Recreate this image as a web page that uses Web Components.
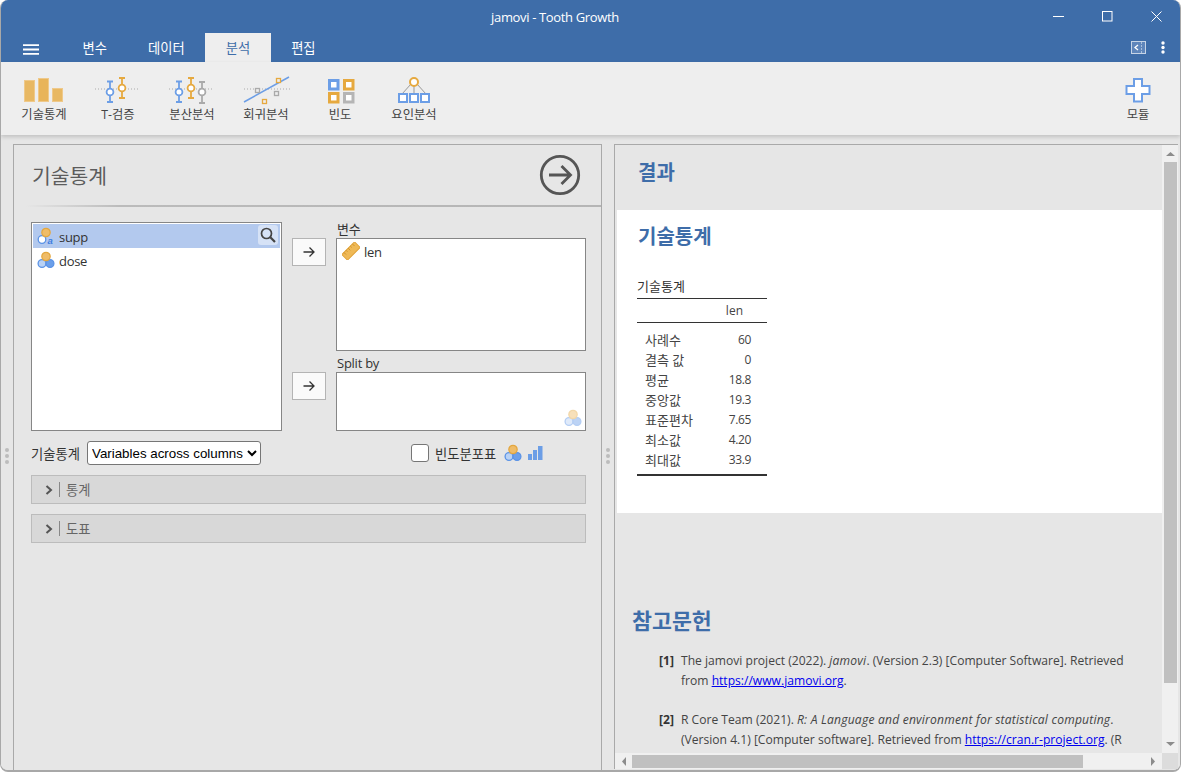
<!DOCTYPE html>
<html lang="ko">
<head>
<meta charset="utf-8">
<title>jamovi - Tooth Growth</title>
<style>
  html, body {
    margin: 0;
    height: 100%;
    background: #fff;
    overflow: hidden;
  }
  body {
    font-family: "Open Sans", "Noto Sans CJK KR", sans-serif;
    font-size: 13px;
    color: #333;
  }
</style>
</head>
<body>
<jm-window>
  <jm-titlebar title-text="jamovi - Tooth Growth"></jm-titlebar>
  <jm-menubar></jm-menubar>
  <jm-ribbon></jm-ribbon>
  <jm-main>
    <jm-options slot="left"></jm-options>
    <jm-results slot="right"></jm-results>
  </jm-main>
</jm-window>

<script>
const BLUE = "#3e6da9";

function nominalIcon(opacity = 1, textType = false) {
  const left = textType
    ? `<circle cx="5" cy="12.5" r="3.8" fill="#fff" stroke="#5b93e6" stroke-width="1.3"/>
       <text x="10.5" y="17" font-size="9.5" font-weight="700" font-style="italic" fill="#3f7fe0" font-family="Liberation Sans">a</text>`
    : `<circle cx="5" cy="12.5" r="3.9" fill="#b9d2f5" stroke="#5b93e6" stroke-width="1.3"/>
       <circle cx="13" cy="12.5" r="3.9" fill="#6c9fe9" stroke="#5b93e6" stroke-width="1.3"/>`;
  return `<svg width="18" height="18" viewBox="0 0 18 18" style="display:block;opacity:${opacity}">
    ${left}
    <circle cx="9" cy="5.5" r="4.2" fill="#efbc68" stroke="#e3a740" stroke-width="1.2"/>
  </svg>`;
}

function arrowIcon() {
  return `<svg width="12" height="12" viewBox="0 0 12 12" style="display:block">
    <path d="M0.5 6H11M6.5 1.5L11 6L6.5 10.5" fill="none" stroke="#333" stroke-width="1.3"/>
  </svg>`;
}

class JmWindow extends HTMLElement {
  constructor() {
    super();
    this._shadowRoot = this.attachShadow({ mode: "open" });
    this._shadowRoot.innerHTML = `
      <style>
        :host {
          display: flex;
          flex-direction: column;
          box-sizing: border-box;
          height: 772px;
          border: 1px solid #a8a8a8;
          border-top: 0;
          border-bottom-width: 2px;
          border-radius: 8px;
          overflow: hidden;
          background: #e6e6e6;
        }
      </style>
      <slot></slot>
    `;
  }
}

class JmTitlebar extends HTMLElement {
  constructor() {
    super();
    this._shadowRoot = this.attachShadow({ mode: "open" });
    this._shadowRoot.innerHTML = `
      <style>
        :host {
          display: flex;
          align-items: center;
          height: 33px;
          flex: none;
          background: ${BLUE};
          color: #fff;
        }
        .title {
          flex: 1;
          padding-left: 76px;
          text-align: center;
          font-size: 13px;
          letter-spacing: -0.35px;
        }
        .ctl {
          width: 49px;
          height: 33px;
          display: flex;
          align-items: center;
          justify-content: center;
        }
        .ctl svg {
          margin-left: 2px;
        }
      </style>
      <div class="title">${this.getAttribute("title-text")}</div>
      <div class="ctl">
        <svg width="11" height="11" viewBox="0 0 11 11"><path d="M0 5.5H11" stroke="#fff"/></svg>
      </div>
      <div class="ctl">
        <svg width="11" height="11" viewBox="0 0 11 11"><rect x=".5" y=".5" width="9.5" height="9.5" fill="none" stroke="#fff"/></svg>
      </div>
      <div class="ctl">
        <svg width="11" height="11" viewBox="0 0 11 11"><path d="M.5 .5L10.5 10.5M10.5 .5L.5 10.5" stroke="#fff"/></svg>
      </div>
    `;
  }
}

class JmMenubar extends HTMLElement {
  constructor() {
    super();
    this._shadowRoot = this.attachShadow({ mode: "open" });
    this._shadowRoot.innerHTML = `
      <style>
        :host {
          display: flex;
          align-items: stretch;
          height: 29px;
          flex: none;
          background: ${BLUE};
          color: #fff;
          font-size: 13.3px;
        }
        .burger {
          width: 61px;
          display: flex;
          align-items: center;
          padding: 3px 0 0 22px;
          box-sizing: border-box;
        }
        .tab {
          padding: 0 20.5px 1px;
          display: flex;
          align-items: center;
        }
        .tab.active {
          background: #eeeeee;
          color: ${BLUE};
        }
        .right {
          margin-left: auto;
          display: flex;
          align-items: center;
          gap: 15px;
          padding-right: 15px;
        }
      </style>
      <div class="burger">
        <svg width="16" height="11" viewBox="0 0 16 11">
          <path d="M0 1.2H16M0 5.5H16M0 9.8H16" stroke="#fff" stroke-width="1.8"/>
        </svg>
      </div>
      <div class="tab">변수</div>
      <div class="tab">데이터</div>
      <div class="tab active">분석</div>
      <div class="tab">편집</div>
      <div class="right">
        <svg width="15" height="13" viewBox="0 0 15 13">
          <rect x=".5" y=".5" width="14" height="12" fill="#5f86bb" stroke="#c6d4e6"/>
          <path d="M7 4L4 6.5L7 9" fill="none" stroke="#fff" stroke-width="1.3"/>
          <path d="M10.5 1V12" stroke="#a9c0dc" stroke-dasharray="2 1"/>
        </svg>
        <svg width="4" height="13" viewBox="0 0 4 13">
          <circle cx="2" cy="2" r="1.7" fill="#fff"/>
          <circle cx="2" cy="6.5" r="1.7" fill="#fff"/>
          <circle cx="2" cy="11" r="1.7" fill="#fff"/>
        </svg>
      </div>
    `;
  }
}

class JmRibbonButton extends HTMLElement {
  constructor() {
    super();
    this._shadowRoot = this.attachShadow({ mode: "open" });
    this._shadowRoot.innerHTML = `
      <style>
        :host {
          display: flex;
          flex-direction: column;
          align-items: center;
          width: 74px;
          padding-top: 10px;
          font-size: 12.3px;
          color: #444;
        }
        .icon {
          width: 60px;
          height: 36px;
        }
        .label {
          line-height: 16px;
          margin-top: -1px;
        }
      </style>
      <div class="icon"><slot></slot></div>
      <div class="label">${this.getAttribute("label")}</div>
    `;
  }
}

class JmRibbon extends HTMLElement {
  constructor() {
    super();
    const pin = (x, y1, y2, cy, c) => `
      <path d="M${x} ${y1}V${y2}M${x - 3} ${y1}H${x + 3}M${x - 3} ${y2}H${x + 3}" stroke="${c}" stroke-width="1.8" fill="none"/>
      <circle cx="${x}" cy="${cy}" r="3.4" fill="#fff" stroke="${c}" stroke-width="1.8"/>`;
    const dots = (x1, x2) =>
      `<path d="M${x1} 17H${x2}" stroke="#aaa" stroke-dasharray="1 2"/>`;
    const sq = (x, y, c) =>
      `<rect x="${x + 0.5}" y="${y + 0.5}" width="4" height="4" fill="#eee" stroke="${c}" stroke-width="1.3"/>`;
    const box = (x, y, c) =>
      `<rect x="${x + 1.5}" y="${y + 1.5}" width="8.5" height="8.5" fill="#fff" stroke="${c}" stroke-width="3"/>`;
    const svg = (inner) =>
      `<svg width="60" height="36" viewBox="0 0 60 36" style="display:block">${inner}</svg>`;
    this._shadowRoot = this.attachShadow({ mode: "open" });
    this._shadowRoot.innerHTML = `
      <style>
        :host {
          display: flex;
          height: 73px;
          flex: none;
          box-sizing: border-box;
          padding: 0 5px 0 6px;
          background: #eeeeee;
          box-shadow: 0 2px 4px rgba(0, 0, 0, 0.16);
          position: relative;
          z-index: 2;
        }
        .spacer {
          flex: 1;
        }
      </style>
      <jm-ribbon-button label="기술통계">${svg(`
        <rect x="10.5" y="8.5" width="10" height="21" fill="#e8b863" stroke="#efc98a"/>
        <rect x="24.5" y="6.5" width="10" height="23" fill="#e8b45a" stroke="#efc98a"/>
        <rect x="38.5" y="16.5" width="10" height="13" fill="#e8b863" stroke="#efc98a"/>`)}</jm-ribbon-button>
      <jm-ribbon-button label="T-검증">${svg(
        dots(7, 52) + pin(22, 9.5, 30, 20, "#6c9ee6") + pin(34, 6, 26, 16, "#e6a93f"))}</jm-ribbon-button>
      <jm-ribbon-button label="분산분석">${svg(
        dots(7, 52) + pin(17, 9.5, 30, 20, "#6c9ee6") + pin(29, 6, 26, 16, "#e6a93f") + pin(40, 10, 31, 20, "#aaa"))}</jm-ribbon-button>
      <jm-ribbon-button label="회귀분석">${svg(
        dots(8, 54) + `<path d="M8 30L53 5" stroke="#6c9ee6" stroke-width="1.5"/>` +
        sq(19, 16, "#aaa") + sq(40, 6, "#e6a93f") + sq(38, 19, "#aaa") + sq(26, 27, "#e6a93f"))}</jm-ribbon-button>
      <jm-ribbon-button label="빈도">${svg(
        box(18, 7, "#6c9ee6") + box(33, 7, "#e6a93f") + box(18, 20, "#e6a93f") + box(33, 20, "#b5b5b5"))}</jm-ribbon-button>
      <jm-ribbon-button label="요인분석">${svg(`
        <path d="M30 12V22M27 12L18 22M33 12L42 22" stroke="#999" fill="none"/>
        <circle cx="30" cy="10" r="4" fill="#fff" stroke="#e6a93f" stroke-width="2"/>
        <rect x="15" y="22" width="8" height="8" fill="#fff" stroke="#6c9ee6" stroke-width="2"/>
        <rect x="26" y="22" width="8" height="8" fill="#fff" stroke="#6c9ee6" stroke-width="2"/>
        <rect x="37" y="22" width="8" height="8" fill="#fff" stroke="#6c9ee6" stroke-width="2"/>`)}</jm-ribbon-button>
      <div class="spacer"></div>
      <jm-ribbon-button label="모듈">${svg(`
        <path d="M26 7H34V14H41.5V22H34V29.5H26V22H18.5V14H26Z" fill="#fff" stroke="#6c9ee6" stroke-width="2"/>`)}</jm-ribbon-button>
    `;
  }
}

class JmSplitter extends HTMLElement {
  constructor() {
    super();
    this._shadowRoot = this.attachShadow({ mode: "open" });
    this._shadowRoot.innerHTML = `
      <style>
        :host {
          display: flex;
          flex-direction: column;
          align-items: center;
          justify-content: center;
          gap: 2px;
          width: 12px;
          flex: none;
          padding-bottom: 2px;
          box-sizing: border-box;
        }
        i {
          width: 4px;
          height: 4px;
          border-radius: 50%;
          background: #bcbcbc;
        }
      </style>
      <i></i><i></i><i></i>
    `;
  }
}

class JmMain extends HTMLElement {
  constructor() {
    super();
    this._shadowRoot = this.attachShadow({ mode: "open" });
    this._shadowRoot.innerHTML = `
      <style>
        :host {
          display: flex;
          flex: 1;
          min-height: 0;
          padding: 9px 2px 0 0;
          background: #e6e6e6;
        }
      </style>
      <jm-splitter></jm-splitter>
      <slot name="left"></slot>
      <jm-splitter></jm-splitter>
      <slot name="right"></slot>
    `;
  }
}

class JmVarItem extends HTMLElement {
  constructor() {
    super();
    this._shadowRoot = this.attachShadow({ mode: "open" });
    this._shadowRoot.innerHTML = `
      <style>
        :host {
          display: flex;
          align-items: center;
          gap: 4px;
          height: 24px;
          padding-left: 4px;
          position: relative;
          font-size: 13px;
          letter-spacing: -0.3px;
          color: #333;
        }
        :host([selected]) {
          background: #b3c9ee;
        }
        .text {
          padding-top: 2px;
        }
        .search {
          position: absolute;
          right: 2px;
          top: 1px;
          width: 20px;
          height: 20px;
          border-radius: 3px;
          background: #d6e2f6;
          display: flex;
          align-items: center;
          justify-content: center;
        }
      </style>
      <slot name="icon"></slot>
      <span class="text"><slot></slot></span>
      ${this.hasAttribute("selected") ? `
      <div class="search">
        <svg width="16" height="16" viewBox="0 0 16 16">
          <circle cx="6.5" cy="6.5" r="5" fill="none" stroke="#444" stroke-width="1.7"/>
          <path d="M10.3 10.3L15 15" stroke="#444" stroke-width="2.2"/>
        </svg>
      </div>` : ""}
    `;
  }
}

class JmVarTarget extends HTMLElement {
  constructor() {
    super();
    this._shadowRoot = this.attachShadow({ mode: "open" });
    this._shadowRoot.innerHTML = `
      <style>
        :host {
          display: grid;
          grid-template-columns: 54px 250px;
          grid-template-rows: 16px auto;
        }
        .label {
          grid-column: 2;
          padding-left: 1px;
          font-size: 13px;
          letter-spacing: -0.25px;
          line-height: 15px;
          color: #333;
        }
        .move {
          grid-row: 2;
          box-sizing: border-box;
          width: 34px;
          height: 28px;
          margin-left: 10px;
          border: 1px solid #b4b4b4;
          background: #fafafa;
          display: flex;
          align-items: center;
          justify-content: center;
        }
        .box {
          grid-row: 2;
          grid-column: 2;
          box-sizing: border-box;
          height: ${this.getAttribute("box-height")}px;
          padding-top: 0;
          border: 1px solid #868686;
          background: #fff;
          position: relative;
        }
        .hint {
          position: absolute;
          right: 3px;
          bottom: 3px;
        }
      </style>
      <div class="label">${this.getAttribute("label")}</div>
      <div class="move">${arrowIcon()}</div>
      <div class="box">
        <slot></slot>
        ${this.hasAttribute("hint") ? `<div class="hint">${nominalIcon(0.45)}</div>` : ""}
      </div>
    `;
  }
}

class JmCollapse extends HTMLElement {
  constructor() {
    super();
    this._shadowRoot = this.attachShadow({ mode: "open" });
    this._shadowRoot.innerHTML = `
      <style>
        :host {
          display: flex;
          align-items: center;
          box-sizing: border-box;
          height: 29px;
          padding-left: 13px;
          border: 1px solid #bcbcbc;
          background: #d8d8d8;
          color: #666;
          font-size: 13.3px;
        }
        .bar {
          width: 1px;
          height: 15px;
          background: #888;
          margin: 0 6px 0 6px;
        }
      </style>
      <svg width="8" height="10" viewBox="0 0 8 10">
        <path d="M1.5 1L6 5L1.5 9" fill="none" stroke="#555" stroke-width="2"/>
      </svg>
      <div class="bar"></div>
      <slot></slot>
    `;
  }
}

class JmOptions extends HTMLElement {
  constructor() {
    super();
    this._shadowRoot = this.attachShadow({ mode: "open" });
    this._shadowRoot.innerHTML = `
      <style>
        :host {
          display: flex;
          flex-direction: column;
          box-sizing: border-box;
          width: 589px;
          flex: none;
          border: 1px solid #a9a9a9;
          border-bottom: 0;
          background: #e6e6e6;
        }
        .head {
          display: flex;
          align-items: center;
          justify-content: space-between;
          height: 60px;
          padding: 0 20px 0 18px;
          font-size: 20.4px;
          color: #5c5c5c;
        }
        .rule {
          height: 2px;
          background: linear-gradient(to right, #e6e6e6 2%, #bbb 18%, #b5b5b5);
        }
        .body {
          padding: 15px 15px 0 17px;
        }
        .vars {
          display: flex;
        }
        .list {
          box-sizing: border-box;
          width: 251px;
          height: 209px;
          padding: 1px;
          border: 1px solid #868686;
          background: #fff;
        }
        .targets {
          display: flex;
          flex-direction: column;
          gap: 5px;
        }
        .row {
          display: flex;
          align-items: center;
          height: 24px;
          margin-top: 10px;
          font-size: 13.3px;
        }
        .row-label {
          width: 51px;
          flex: none;
        }
        select {
          box-sizing: border-box;
          width: 174px;
          height: 24px;
          margin: 0 0 0 5px;
          font-family: "Liberation Sans", sans-serif;
          font-size: 13.33px;
          color: #000;
          background: #fff;
          border: 1px solid #767676;
          border-radius: 3px;
        }
        .check {
          box-sizing: border-box;
          width: 18px;
          height: 18px;
          margin-left: 150px;
          border: 1px solid #767676;
          border-radius: 3px;
          background: #fff;
        }
        .check-label {
          width: 62px;
          margin: 0 7px 0 6px;
          white-space: nowrap;
        }
        jm-collapse {
          margin-top: 10px;
        }
      </style>
      <div class="head">
        <span>기술통계</span>
        <svg width="42" height="42" viewBox="0 0 42 42">
          <circle cx="21" cy="21" r="18.7" fill="none" stroke="#555" stroke-width="2.8"/>
          <path d="M10 21H31M22.5 12L31.5 21L22.5 30" fill="none" stroke="#555" stroke-width="2.8"/>
        </svg>
      </div>
      <div class="rule"></div>
      <div class="body">
        <div class="vars">
          <div class="list">
            <jm-var-item selected><span slot="icon">${nominalIcon(1, true)}</span>supp</jm-var-item>
            <jm-var-item><span slot="icon">${nominalIcon()}</span>dose</jm-var-item>
          </div>
          <div class="targets">
            <jm-var-target label="변수" box-height="113">
              <jm-var-item style="padding-left: 5px">
                <span slot="icon">
                  <svg width="18" height="18" viewBox="0 0 18 18" style="display:block">
                    <g transform="rotate(-45 9 9)">
                      <rect x="0" y="5" width="18" height="8" rx="1" fill="#efb956" stroke="#e0a238"/>
                      <path d="M3 5V8M6 5V7M9 5V8M12 5V7M15 5V8" stroke="#c98d26" stroke-width=".8"/>
                    </g>
                  </svg>
                </span>len
              </jm-var-item>
            </jm-var-target>
            <jm-var-target label="Split by" box-height="59" hint></jm-var-target>
          </div>
        </div>
        <div class="row">
          <span class="row-label">기술통계</span>
          <select><option>Variables across columns</option></select>
          <div class="check"></div>
          <span class="check-label">빈도분포표</span>
          ${nominalIcon()}
          <svg width="16" height="16" viewBox="0 0 16 16" style="margin-left:6px">
            <rect x="0" y="9" width="4" height="6" fill="#6c9ee6"/>
            <rect x="5" y="5" width="4" height="10" fill="#6c9ee6"/>
            <rect x="10" y="1" width="4.5" height="14" fill="#6c9ee6"/>
          </svg>
        </div>
        <jm-collapse>통계</jm-collapse>
        <jm-collapse>도표</jm-collapse>
      </div>
    `;
  }
}

class JmScrollbar extends HTMLElement {
  constructor() {
    super();
    const vertical = this.getAttribute("dir") === "v";
    const tri = (s) =>
      `<svg width="17" height="17" viewBox="0 0 17 17" style="display:block;flex:none"><path d="${s}" fill="#8c8c8c"/></svg>`;
    this._shadowRoot = this.attachShadow({ mode: "open" });
    this._shadowRoot.innerHTML = `
      <style>
        :host {
          display: flex;
          flex-direction: ${vertical ? "column" : "row"};
          background: #f0f0f0;
          overflow: hidden;
        }
        .thumb {
          flex: none;
          background: #c0c0c0;
          ${vertical
            ? "width: 13px; height: 521px; margin: 0 1px 0 2px;"
            : "height: 13px; width: 451px; margin: 2px 0 1px;"}
        }
        .space {
          flex: 1;
        }
      </style>
      ${vertical ? tri("M4 11L8.5 7L13 11Z") : tri("M11 4L7 8.5L11 13Z")}
      <div class="thumb"></div>
      <div class="space"></div>
      ${vertical ? tri("M4 6L13 6L8.5 10Z") : tri("M6 4L10 8.5L6 13Z")}
    `;
  }
}

class JmTable extends HTMLElement {
  constructor() {
    super();
    const rows = [
      ["사례수", "60"],
      ["결측 값", "0"],
      ["평균", "18.8"],
      ["중앙값", "19.3"],
      ["표준편차", "7.65"],
      ["최소값", "4.20"],
      ["최대값", "33.9"],
    ];
    this._shadowRoot = this.attachShadow({ mode: "open" });
    this._shadowRoot.innerHTML = `
      <style>
        :host {
          display: block;
          width: 130px;
          font-size: 12px;
          color: #444;
        }
        .caption {
          height: 23px;
          line-height: 22px;
          font-size: 13px;
          color: #333;
        }
        .head {
          display: flex;
          justify-content: flex-end;
          height: 23px;
          line-height: 23px;
          padding-right: 24px;
          border-top: 1px solid #333;
          border-bottom: 1px solid #333;
        }
        .rows {
          padding: 7px 0 4px;
          border-bottom: 2px solid #333;
        }
        .r {
          display: flex;
          justify-content: space-between;
          height: 20px;
          line-height: 20px;
          padding: 0 16px 0 8px;
        }
        .r span:first-child {
          font-size: 13px;
        }
        .r span:last-child {
          letter-spacing: -0.4px;
        }
      </style>
      <div class="caption">기술통계</div>
      <div class="head"><span>len</span></div>
      <div class="rows">
        ${rows.map((r) => `<div class="r"><span>${r[0]}</span><span>${r[1]}</span></div>`).join("")}
      </div>
    `;
  }
}

class JmResults extends HTMLElement {
  constructor() {
    super();
    this._shadowRoot = this.attachShadow({ mode: "open" });
    this._shadowRoot.innerHTML = `
      <style>
        :host {
          display: grid;
          grid-template-columns: 547px 16px;
          grid-template-rows: 608px 16px;
          box-sizing: border-box;
          flex: 1;
          min-width: 0;
          border: 1px solid #a9a9a9;
          border-right: 0;
          border-bottom: 0;
          background: #e6e6e6;
          align-self: start;
        }
        .content {
          overflow: hidden;
        }
        h1 {
          margin: 0;
          font-size: 20px;
          line-height: 28px;
          font-weight: 700;
          color: ${BLUE};
        }
        .top {
          height: 65px;
          padding: 14px 0 0 23px;
          box-sizing: border-box;
        }
        .section {
          margin-left: 2px;
          height: 303px;
          padding: 13px 0 0 20px;
          box-sizing: border-box;
          background: #fff;
        }
        .section h1 {
          margin-left: 1px;
        }
        jm-table {
          margin-top: 24px;
        }
        .refs {
          padding: 94px 0 0 17px;
        }
        .refs h1 {
          font-size: 21.7px;
        }
        .ref {
          display: grid;
          grid-template-columns: 22px 450px;
          margin: 0 0 20px 27px;
          font-size: 12.1px;
          line-height: 19.5px;
          color: #444;
        }
        .ref b {
          color: #333;
        }
        .ref i {
          letter-spacing: 0.2px;
        }
        .list {
          margin-top: 16px;
        }
        a {
          color: #0000ee;
          text-decoration: underline;
        }
        .corner {
          background: #dcdcdc;
        }
      </style>
      <div class="content">
        <div class="top"><h1>결과</h1></div>
        <div class="section">
          <h1>기술통계</h1>
          <jm-table></jm-table>
        </div>
        <div class="refs">
          <h1>참고문헌</h1>
          <div class="list">
            <div class="ref"><b>[1]</b><div>The jamovi project (2022). <i>jamovi</i>. (Version 2.3) [Computer Software]. Retrieved from <a href="#">https://www.jamovi.org</a>.</div></div>
            <div class="ref"><b>[2]</b><div>R Core Team (2021). <i>R: A Language and environment for statistical computing</i>. (Version 4.1) [Computer software]. Retrieved from <a href="#">https://cran.r-project.org</a>. (R packages retrieved from MRAN snapshot 2022-01-01).</div></div>
          </div>
        </div>
      </div>
      <jm-scrollbar dir="v"></jm-scrollbar>
      <jm-scrollbar dir="h"></jm-scrollbar>
      <div class="corner"></div>
    `;
  }
}

customElements.define("jm-window", JmWindow);
customElements.define("jm-titlebar", JmTitlebar);
customElements.define("jm-menubar", JmMenubar);
customElements.define("jm-ribbon-button", JmRibbonButton);
customElements.define("jm-ribbon", JmRibbon);
customElements.define("jm-splitter", JmSplitter);
customElements.define("jm-main", JmMain);
customElements.define("jm-var-item", JmVarItem);
customElements.define("jm-var-target", JmVarTarget);
customElements.define("jm-collapse", JmCollapse);
customElements.define("jm-options", JmOptions);
customElements.define("jm-scrollbar", JmScrollbar);
customElements.define("jm-table", JmTable);
customElements.define("jm-results", JmResults);
</script>
</body>
</html>
